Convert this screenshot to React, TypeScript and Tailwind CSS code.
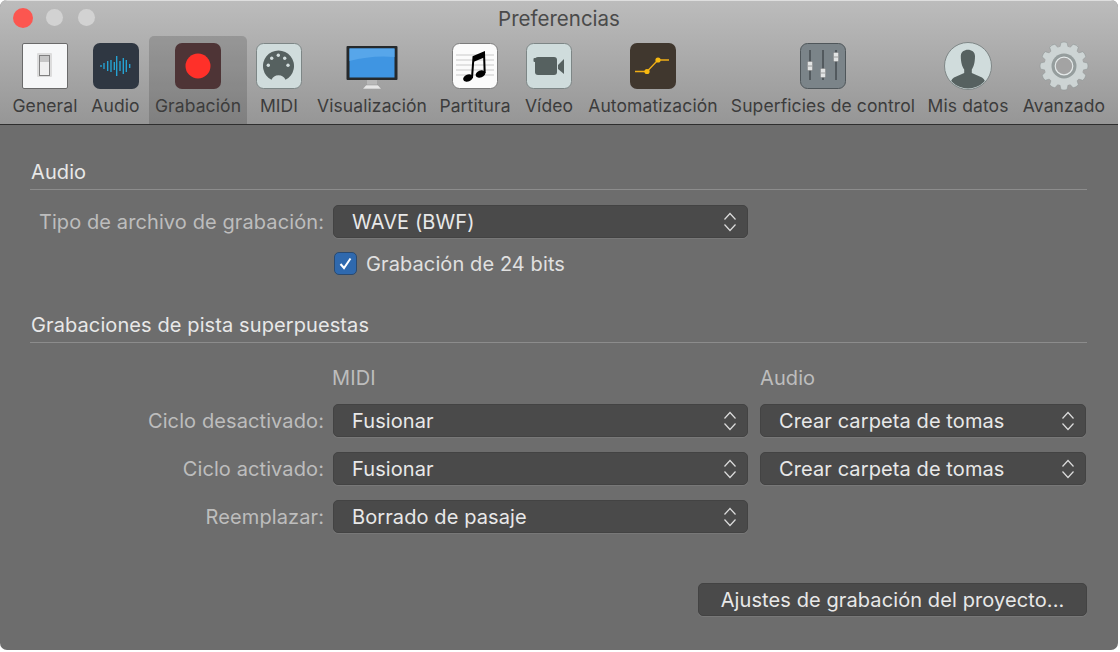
import React from "react";

const font = { fontFamily: "Inter, 'Liberation Sans', sans-serif" };

function SwitchIcon() {
  return (
    <svg width="46" height="46" viewBox="0 0 46 46">
      <rect x="0.5" y="0.5" width="45" height="45" rx="1.500" fill="#f6f7f8" stroke="#6a6a6a" />
      <rect x="15" y="10" width="15" height="24" rx="1" fill="#dcdcdc" />
      <rect x="17.500" y="12.500" width="10" height="20" fill="#f0f0f0" stroke="#808080" />
      <rect x="18" y="13" width="9" height="6" fill="#c6c6c6" />
    </svg>
  );
}

function AudioIcon() {
  const bars = [[8, 1], [11, 3], [14.700, 5], [18, 6], [21.300, 4], [23.700, 10], [27, 5], [30.300, 8], [33.300, 6], [36.700, 2]];
  return (
    <svg width="46" height="46" viewBox="0 0 46 46">
      <rect width="46" height="46" rx="7" fill="#2f3742" />
      {bars.map(([x, h]) => (
        <line key={x} x1={x} x2={x} y1={23 - h} y2={23 + h} stroke="#25a9dc" strokeWidth="1.300" />
      ))}
    </svg>
  );
}

function RecordIcon() {
  return (
    <svg width="46" height="46" viewBox="0 0 46 46">
      <rect width="46" height="46" rx="7" fill="#4e3436" />
      <circle cx="23" cy="23" r="12.500" fill="#ff3029" />
    </svg>
  );
}

function MidiIcon() {
  return (
    <svg width="46" height="46" viewBox="0 0 46 46">
      <rect x="0.5" y="0.5" width="45" height="45" rx="7" fill="#d0dcdc" stroke="#7d8686" />
      <path d="M15.500 36.800 A15.500 15.500 0 1 1 29.500 36.800 C28 33.800 26 32.300 22.500 32.300 C19 32.300 17 33.800 15.500 36.800 Z" fill="#566160" />
      {[[12.300, 22.300], [15.700, 15.300], [22.300, 12.300], [28.700, 15.300], [32, 22.300]].map(([cx, cy]) => (
        <circle key={cx} cx={cx} cy={cy} r="1.700" fill="#d3dede" />
      ))}
    </svg>
  );
}

function MonitorIcon() {
  return (
    <svg width="52" height="46" viewBox="0 0 52 46">
      <rect x="0.500" y="3" width="51" height="34" rx="1" fill="#26292b" />
      <rect x="3.500" y="5.500" width="45" height="29" fill="#3f95e2" />
      <path d="M3.500 5.500 H48.500 V14 Q26 12 3.500 18 Z" fill="#57a6ea" />
      <rect x="21" y="37" width="10" height="5" fill="#b9b9b9" />
      <path d="M16.500 46 L20 42 H32 L35.500 46 Z" fill="#e6e6e6" stroke="#8d8d8d" strokeWidth="0.500" />
    </svg>
  );
}

function ScoreIcon() {
  return (
    <svg width="46" height="46" viewBox="0 0 46 46">
      <rect x="0.5" y="0.5" width="45" height="45" rx="7" fill="#fbfbfb" stroke="#7c7c7c" />
      {[12, 17, 22, 27, 32].map((y) => (
        <line key={y} x1="4" x2="42" y1={y} y2={y} stroke="#c9c9c9" />
      ))}
      <ellipse cx="16" cy="35" rx="5" ry="3.500" fill="#000" transform="rotate(-20 16 35)" />
      <ellipse cx="28.500" cy="31" rx="5" ry="3.500" fill="#000" transform="rotate(-20 28.500 31)" />
      <path d="M20 35 L21.500 14 L32 9.500 L32.700 30" fill="none" stroke="#000" strokeWidth="2" />
      <path d="M21.500 14 L32 9.500 L32.200 14.500 L21.200 19 Z" fill="#000" />
    </svg>
  );
}

function VideoIcon() {
  return (
    <svg width="46" height="46" viewBox="0 0 46 46">
      <rect x="0.5" y="0.5" width="45" height="45" rx="7" fill="#cfdcdc" stroke="#7d8686" />
      <rect x="9" y="14" width="22" height="18" rx="3" fill="#566160" />
      <rect x="7.500" y="15" width="3" height="4" rx="1" fill="#566160" />
      <path d="M32 22 L38 16 V31 L32 26 Z" fill="#566160" />
    </svg>
  );
}

function AutomationIcon() {
  return (
    <svg width="46" height="46" viewBox="0 0 46 46">
      <rect width="46" height="46" rx="7" fill="#40372e" />
      <path d="M5 28.500 H17 L28 17 H39" fill="none" stroke="#f0ae17" strokeWidth="1.300" />
      <circle cx="17" cy="28.500" r="2.600" fill="#f7b90f" />
      <circle cx="28" cy="17" r="2.600" fill="#f7b90f" />
    </svg>
  );
}

function MixerIcon() {
  return (
    <svg width="46" height="46" viewBox="0 0 46 46">
      <rect x="0.5" y="0.5" width="45" height="45" rx="7" fill="#7b8489" stroke="#4f565a" />
      {[[10, 23], [23, 30], [36, 14]].map(([x, y]) => (
        <g key={x}>
          <line x1={x} x2={x} y1="7" y2="37" stroke="#22272a" strokeWidth="0.900" />
          <rect x={x - 2.500} y={y - 4.500} width="5" height="9" rx="1" fill="#e2e4e4" stroke="#777" strokeWidth="0.400" />
          <line x1={x - 2} x2={x + 2} y1={y} y2={y} stroke="#8a8a8a" strokeWidth="0.800" />
        </g>
      ))}
    </svg>
  );
}

function UserIcon() {
  return (
    <svg width="48" height="48" viewBox="0 0 48 48" className="-mt-px">
      <defs>
        <clipPath id="userClip">
          <circle cx="24" cy="24" r="22.500" />
        </clipPath>
      </defs>
      <circle cx="24" cy="24" r="23.500" fill="#d0dcdc" stroke="#7f8787" />
      <g clipPath="url(#userClip)" fill="#566160">
        <path d="M16.800 14 C16.800 5.500 31 5.500 31 14 C31 21 29.500 25 27.800 27.500 V31 L38 35.500 Q42 37.500 43 48 H5 Q6 37.500 10 35.500 L20.200 31 V27.500 C18.500 25 16.800 21 16.800 14 Z" />
      </g>
    </svg>
  );
}

function GearIcon() {
  const teeth = Array.from({ length: 12 }, (_, i) => i * 30);
  return (
    <svg width="50" height="50" viewBox="0 0 50 50" className="-mt-[2px]">
      <g fill="#cdd4d4" stroke="#8d9595" strokeWidth="0.500">
        {teeth.map((a) => (
          <path key={a} d="M20.500 8 L22 1.500 Q25 0.500 28 1.500 L29.500 8 Z" transform={`rotate(${a} 25 25)`} />
        ))}
      </g>
      <circle cx="25" cy="25" r="19.500" fill="#cdd4d4" />
      <circle cx="25" cy="25" r="12.500" fill="#959d9d" />
      <circle cx="25" cy="25" r="8.800" fill="#a3a3a3" stroke="#e4e9e9" strokeWidth="1.200" />
    </svg>
  );
}

const tabs = [
  { label: "General", width: "w-[74px]", icon: <SwitchIcon /> },
  { label: "Audio", width: "w-[67px]", icon: <AudioIcon /> },
  { label: "Grabación", width: "w-[98px]", icon: <RecordIcon />, active: true },
  { label: "MIDI", width: "w-[64px]", icon: <MidiIcon /> },
  { label: "Visualización", width: "w-[122px]", icon: <MonitorIcon /> },
  { label: "Partitura", width: "w-[84px]", icon: <ScoreIcon /> },
  { label: "Vídeo", width: "w-[64px]", icon: <VideoIcon /> },
  { label: "Automatización", width: "w-[144px]", icon: <AutomationIcon /> },
  { label: "Superficies de control", width: "w-[196px]", icon: <MixerIcon /> },
  { label: "Mis datos", width: "w-[94px]", icon: <UserIcon /> },
  { label: "Avanzado", width: "w-[98px]", icon: <GearIcon /> },
];

function Chevrons() {
  return (
    <svg width="14" height="24" viewBox="0 0 14 24" fill="none" stroke="#dcdcdc" strokeWidth="1.200">
      <path d="M1.500 9.500 L7 3.500 L12.500 9.500" />
      <path d="M1.500 14.500 L7 20.500 L12.500 14.500" />
    </svg>
  );
}

function Select({ value, width }: { value: string; width: string }) {
  return (
    <div className={`${width} h-[33px] flex items-center justify-between pl-[18px] pr-[10px] rounded-[5px] bg-[#4a4a4a] border border-[#434343] shadow-[0_1px_0_#787878] text-[20px] tracking-[0.1px] text-[#e8e8e8]`}>
      <span>{value}</span>
      <Chevrons />
    </div>
  );
}

function Row({ label, children }: { label: string; children: React.ReactNode }) {
  return (
    <div className="flex items-center h-[33px]">
      <div className="w-[294px] text-right text-[20px] tracking-[0.1px] text-[#bdbdbd] shrink-0">{label}</div>
      <div className="ml-[9px] flex gap-[12px]">{children}</div>
    </div>
  );
}

function SectionTitle({ title }: { title: string }) {
  return (
    <div className="w-[1057px] h-[29px] border-b border-[#8c8c8c] text-[20px] leading-[22px] tracking-[0.1px] text-[#e8e8e8] pl-px">
      {title}
    </div>
  );
}

export default function App() {
  return (
    <div className="w-[1120px] h-[652px] bg-white" style={font}>
      <div className="w-[1118px] h-[650px] rounded-[7px] overflow-hidden flex flex-col bg-[#6d6d6d]">
        {/* Toolbar */}
        <div className="h-[125px] shrink-0 bg-gradient-to-b from-[#bcbcbc] to-[#969696] border-b border-[#2e2e2e] border-t border-t-[#dedede]">
          <div className="relative h-[35px] text-center text-[20.5px] leading-[36px] text-[#4a4a4a]">
            Preferencias
            <div className="absolute left-[12.5px] top-[7px] w-[20px] h-[20px] rounded-full bg-[#fc5650]" />
            <div className="absolute left-[46px] top-[8px] w-[17px] h-[17px] rounded-full bg-[#d2d2d2]" />
            <div className="absolute left-[78px] top-[8px] w-[17px] h-[17px] rounded-full bg-[#d2d2d2]" />
          </div>
          <div className="flex pl-[8px]">
            {tabs.map((t) => (
              <div
                key={t.label}
                className={`${t.width} h-[88px] flex flex-col items-center rounded-t-[5px] ${t.active ? "bg-black/15" : ""}`}
              >
                <div className="h-[55px] pt-[7px] flex items-start justify-center">{t.icon}</div>
                <div className="text-[17.5px] leading-[22px] tracking-[0.1px] mt-[4px] whitespace-nowrap text-[#3c3c3c]">{t.label}</div>
              </div>
            ))}
          </div>
        </div>

        {/* Content */}
        <div className="pl-[30px] pt-[36px]">
          <SectionTitle title="Audio" />
        </div>
        <div className="pl-[30px] mt-[15px] flex flex-col">
          <Row label="Tipo de archivo de grabación:">
            <Select value="WAVE (BWF)" width="w-[415px]" />
          </Row>
          <div className="flex items-center mt-[13px] ml-[304px] h-[24px] gap-[9px]">
            <div className="w-[23px] h-[23px] rounded-[5px] bg-[#2f69ae] border border-[#2a4a70] flex items-center justify-center">
              <svg width="15" height="15" viewBox="0 0 15 15" fill="none" stroke="#fff" strokeWidth="2">
                <path d="M2.500 8 L6 12 L12.500 2.500" />
              </svg>
            </div>
            <span className="pt-px text-[20px] tracking-[0.1px] text-[#e0e0e0]">Grabación de 24 bits</span>
          </div>
        </div>

        <div className="pl-[30px] mt-[39px]">
          <SectionTitle title="Grabaciones de pista superpuestas" />
        </div>

        <div className="pl-[30px] mt-[22px] flex flex-col">
          <div className="flex h-[26px] ml-[302px] text-[20px] tracking-[0.1px] text-[#bdbdbd] leading-[26px]">
            <div className="w-[428px]">MIDI</div>
            <div>Audio</div>
          </div>
          <div className="mt-[13px] flex flex-col gap-[15px]">
            <Row label="Ciclo desactivado:">
              <Select value="Fusionar" width="w-[415px]" />
              <Select value="Crear carpeta de tomas" width="w-[326px]" />
            </Row>
            <Row label="Ciclo activado:">
              <Select value="Fusionar" width="w-[415px]" />
              <Select value="Crear carpeta de tomas" width="w-[326px]" />
            </Row>
            <Row label="Reemplazar:">
              <Select value="Borrado de pasaje" width="w-[415px]" />
            </Row>
          </div>
          <div className="flex justify-end mt-[50px] pr-[31px]">
            <div className="w-[389px] h-[33px] flex items-center justify-center rounded-[5px] bg-[#4a4a4a] border border-[#434343] shadow-[0_1px_0_#787878] text-[20px] tracking-[0.1px] text-[#e8e8e8]">
              Ajustes de grabación del proyecto...
            </div>
          </div>
        </div>
      </div>
    </div>
  );
}
